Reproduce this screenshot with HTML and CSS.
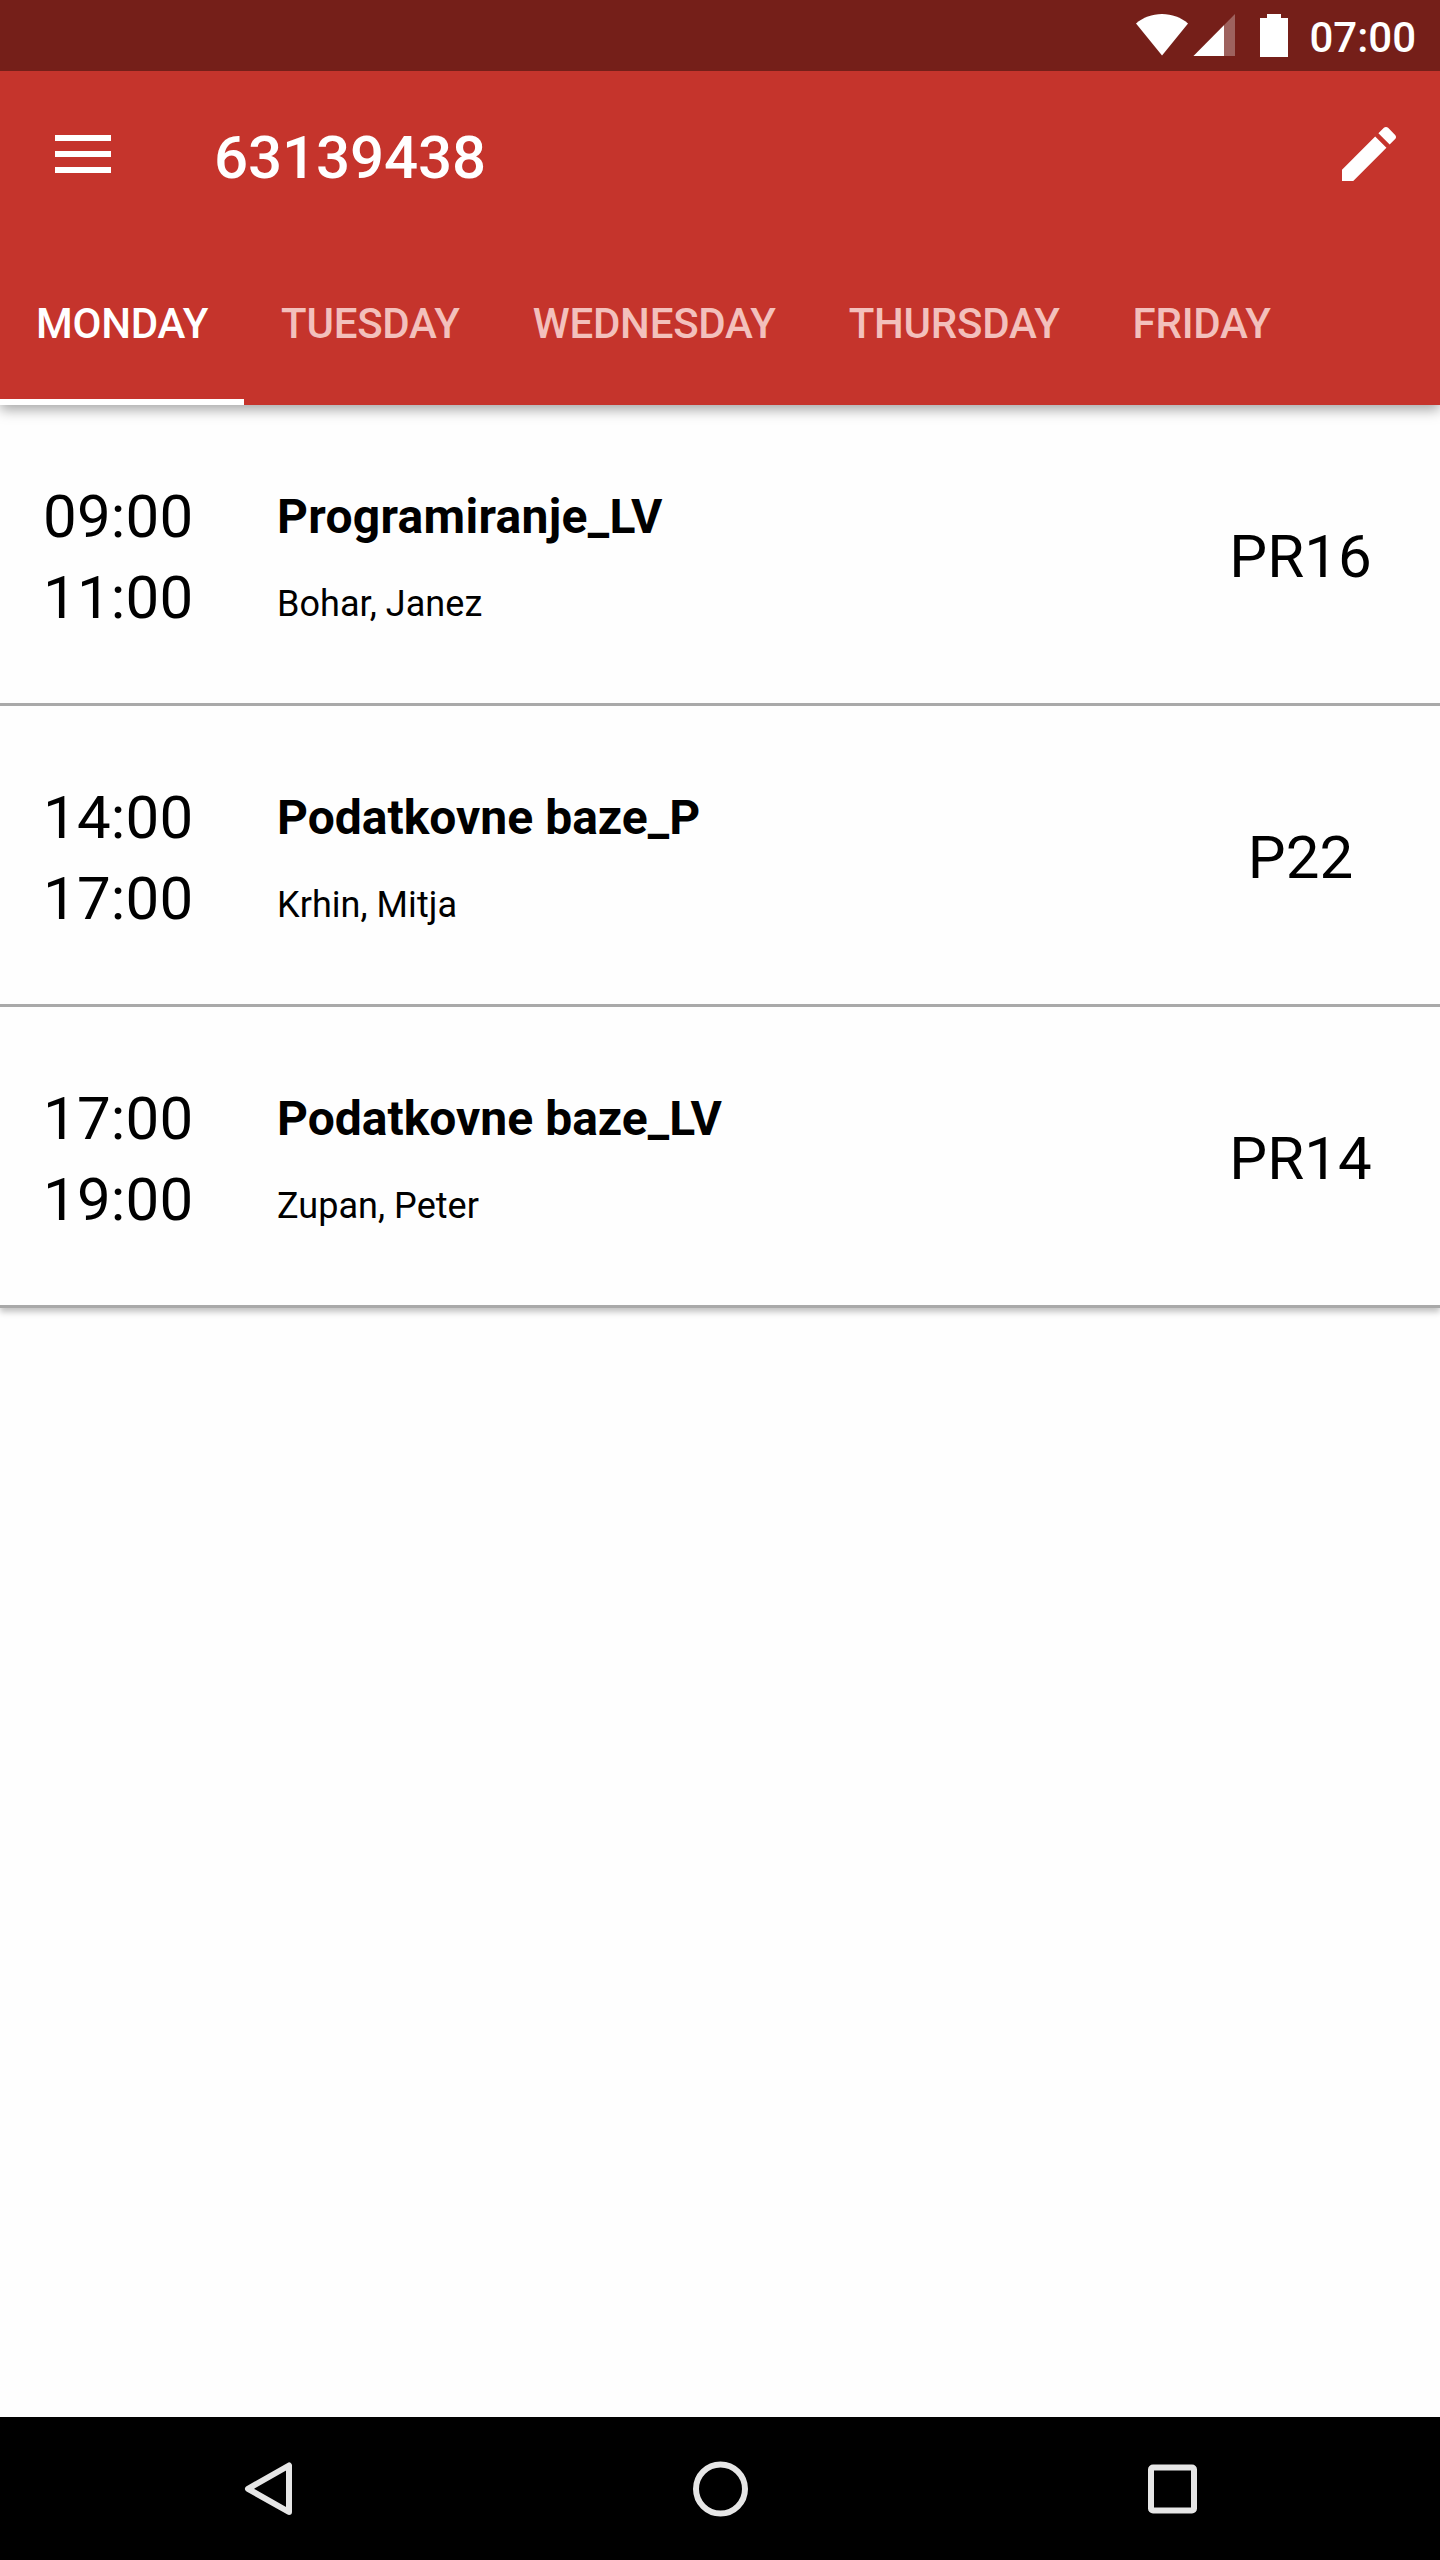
FILE: index.html
```html
<!DOCTYPE html>
<html lang="en">
<head>
<meta charset="utf-8">
<title>Timetable</title>
<link rel="stylesheet" href="styles.css">
</head>
<body>
<div class="screen">
  <div class="status-bar">
    <svg class="status-icons" width="156" height="71" viewBox="0 0 156 71" fill="#fff">
      <path d="M0 23.5C7 17.500 16 14 26 14s19 3.500 26 9.500L26 55.500z"/>
      <path d="M57.500 56H99V14z" opacity=".3"/>
      <path d="M57.500 56H88V25.200z"/>
      <path d="M131 14h14v4h7v39h-28V18h7z"/>
    </svg>
    <span class="clock">07:00</span>
  </div>
  <header class="app-bar">
    <div class="toolbar">
      <svg class="menu-icon" width="56" height="38" viewBox="0 0 56 38" fill="#fff">
        <path d="M0 0h56v6H0zM0 16h56v6H0zM0 32h56v6H0z"/>
      </svg>
      <h1 class="title">63139438</h1>
      <svg class="edit-icon" width="72" height="72" viewBox="0 0 24 24" fill="#fff">
        <path d="M3 17.250V21h3.750L17.810 9.940l-3.750-3.750L3 17.250zM20.710 7.040c.39-.39.39-1.020 0-1.410l-2.340-2.340c-.39-.39-1.020-.39-1.410 0l-1.830 1.830 3.750 3.750 1.830-1.830z"/>
      </svg>
    </div>
    <nav class="tabs">
      <a class="tab tab-active">MONDAY</a>
      <a class="tab">TUESDAY</a>
      <a class="tab">WEDNESDAY</a>
      <a class="tab">THURSDAY</a>
      <a class="tab">FRIDAY</a>
    </nav>
  </header>
  <main class="schedule">
    <ul class="list">
      <li class="row">
        <div class="times"><span>09:00</span><span>11:00</span></div>
        <div class="course"><span class="name name-loose">Programiranje_LV</span><span class="teacher">Bohar, Janez</span></div>
        <div class="room">PR16</div>
      </li>
      <li class="row">
        <div class="times"><span>14:00</span><span>17:00</span></div>
        <div class="course"><span class="name">Podatkovne baze_P</span><span class="teacher">Krhin, Mitja</span></div>
        <div class="room">P22</div>
      </li>
      <li class="row">
        <div class="times"><span>17:00</span><span>19:00</span></div>
        <div class="course"><span class="name">Podatkovne baze_LV</span><span class="teacher">Zupan, Peter</span></div>
        <div class="room">PR14</div>
      </li>
    </ul>
  </main>
  <footer class="nav-bar">
    <svg width="60" height="60" viewBox="0 0 60 60" fill="none" stroke="#e6e6e6" stroke-width="6" stroke-linejoin="round">
      <path d="M49 6.500v46.500L8 29.800z"/>
    </svg>
    <svg width="60" height="60" viewBox="0 0 60 60" fill="none" stroke="#e6e6e6" stroke-width="6">
      <circle cx="29.500" cy="30" r="24.500"/>
    </svg>
    <svg width="60" height="60" viewBox="0 0 60 60" fill="none" stroke="#e6e6e6" stroke-width="6">
      <rect x="9" y="8.500" width="43" height="43" rx="2"/>
    </svg>
  </footer>
</div>
</body>
</html>
```
FILE: styles.css
```css
* { box-sizing: border-box; }
body { margin: 0; font-family: Roboto, sans-serif; color: #000; }
.screen { width: 1440px; height: 2560px; display: flex; flex-direction: column; background: #fefefe; overflow: hidden; }

.status-bar { flex: none; height: 71px; display: flex; justify-content: flex-end; padding-right: 24px; background: #751f19; color: #fff; z-index: 2; }
.status-icons { margin-right: 17px; }
.clock { font-size: 42px; font-weight: 500; line-height: 75px; }

.app-bar { flex: none; height: 334px; background: #c5342c; color: #fff; box-shadow: 0 5px 12px rgba(0, 0, 0, .34); z-index: 1; }
.toolbar { height: 168px; display: flex; align-items: center; padding: 0 35px 2px 55px; }
.title { flex: 1; margin: 8px 0 0 103px; font-size: 60px; font-weight: 500; line-height: 70px; letter-spacing: -.1px; }
.tabs { height: 166px; display: flex; gap: 1px; }
.tab { padding: 3px 36px 0; border-bottom: 6px solid transparent; font-size: 42px; font-weight: 500; letter-spacing: -.25px; line-height: 164px; height: 166px; color: #f3c0bc; }
.tab-active { color: #fff; border-bottom-color: #fff; }

.schedule { flex: 1; }
.list { list-style: none; margin: 0; padding: 0; background: #fefefe; box-shadow: 0 4px 6px rgba(0, 0, 0, .24); }
.row { height: 301px; padding: 5px 32px 0 43px; border-bottom: 3px solid #a9a9a9; display: flex; align-items: center; }
.times { display: flex; flex-direction: column; width: 234px; font-size: 60px; letter-spacing: .2px; line-height: 81px; }
.course { flex: 1; display: flex; flex-direction: column; gap: 27px; padding-top: 4px; }
.name { font-size: 48px; font-weight: 700; line-height: 64px; }
.name-loose { letter-spacing: .3px; }
.teacher { font-size: 36px; line-height: 56px; letter-spacing: .05px; }
.room { width: 215px; text-align: center; font-size: 60px; line-height: 70px; }

.nav-bar { flex: none; height: 143px; display: flex; justify-content: space-between; align-items: center; padding: 0 238px 0 240px; background: #000; }
```
